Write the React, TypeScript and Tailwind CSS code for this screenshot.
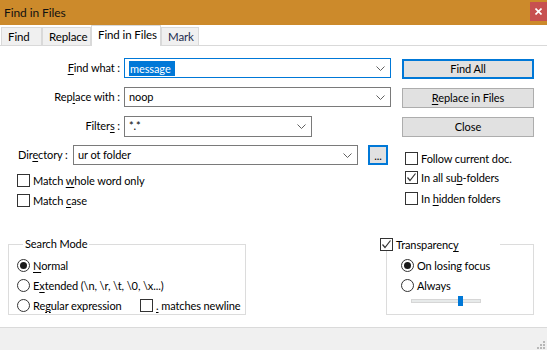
import React from "react";

function U({ children }: { children: React.ReactNode }) {
  return <span className="underline underline-offset-2 decoration-1">{children}</span>;
}

function Chevron() {
  return (
    <svg width="9" height="5" viewBox="0 0 9 5" className="shrink-0">
      <path d="M0.5 0.5 L4.5 4.5 L8.5 0.5" fill="none" stroke="#606060" strokeWidth="1" />
    </svg>
  );
}

function Combo({
  className,
  focused,
  children,
}: {
  className: string;
  focused?: boolean;
  children: React.ReactNode;
}) {
  return (
    <div
      className={`flex items-center justify-between bg-white pl-[4px] pr-[5px] border ${
        focused ? "border-[#0078d7]" : "border-[#7a7a7a]"
      } ${className}`}
    >
      <div className="flex items-center">{children}</div>
      <Chevron />
    </div>
  );
}

function Button({ focused, children }: { focused?: boolean; children: React.ReactNode }) {
  return (
    <div
      className={`flex h-[20px] w-[132px] items-center justify-center bg-[#e1e1e1] ${
        focused ? "border-2 border-[#0078d7]" : "border border-[#adadad]"
      }`}
    >
      {children}
    </div>
  );
}

function Check({ checked }: { checked?: boolean }) {
  return (
    <div className="flex h-[13px] w-[13px] shrink-0 items-center justify-center border border-[#333] bg-white">
      {checked && (
        <svg width="11" height="11" viewBox="0 0 11 11">
          <path d="M1.5 5.5 L4 8.5 L9.5 1.5" fill="none" stroke="#333" strokeWidth="1.2" />
        </svg>
      )}
    </div>
  );
}

function Radio({ checked }: { checked?: boolean }) {
  return (
    <div className="flex h-[13px] w-[13px] shrink-0 items-center justify-center rounded-full border border-[#333] bg-white">
      {checked && <div className="h-[7px] w-[7px] rounded-full bg-[#1a1a1a]" />}
    </div>
  );
}

function CheckRow({ checked, children }: { checked?: boolean; children: React.ReactNode }) {
  return (
    <div className="flex h-[13px] items-center gap-[3px] whitespace-nowrap">
      <Check checked={checked} />
      <span className="leading-none">{children}</span>
    </div>
  );
}

function RadioRow({
  checked,
  className = "",
  children,
}: {
  checked?: boolean;
  className?: string;
  children: React.ReactNode;
}) {
  return (
    <div className={`flex h-[20px] items-center gap-[3px] whitespace-nowrap ${className}`}>
      <Radio checked={checked} />
      <span className="leading-none">{children}</span>
    </div>
  );
}

function SizeGrip() {
  const dots = [
    [9, 1],
    [6, 4],
    [9, 4],
    [3, 7],
    [6, 7],
    [9, 7],
  ];
  return (
    <svg width="12" height="10" viewBox="0 0 12 10" className="self-end">
      {dots.map(([x, y], i) => (
        <rect key={i} x={x} y={y} width="2" height="2" fill="#b8b8b8" />
      ))}
    </svg>
  );
}

export default function App() {
  const tabs = [
    { name: "Find", w: "w-[41px]" },
    { name: "Replace", w: "w-[49px]" },
    { name: "Find in Files", w: "w-[70px]", active: true },
    { name: "Mark", w: "w-[38px]" },
  ];

  return (
    <div className="flex h-[350px] w-[547px] flex-col overflow-hidden whitespace-nowrap bg-white font-['Lato',sans-serif] text-[11px] tracking-[-0.1px] text-black">
      {/* title bar */}
      <div className="flex h-[25px] shrink-0 items-start justify-between bg-[#cc8a2b]">
        <span className="pl-[4px] pt-[7px] text-[12px] leading-none text-[#111]">Find in Files</span>
        <div className="mt-[2px] flex h-[19px] w-[17px] items-center justify-center bg-[#c75050]">
          <svg width="7" height="7" viewBox="0 0 7 7">
            <path d="M0.5 0.5 L6.5 6.5 M6.5 0.5 L0.5 6.5" stroke="#fff" strokeWidth="1.6" />
          </svg>
        </div>
      </div>

      {/* tabs */}
      <div className="flex h-[21px] shrink-0 items-end border-b border-[#d9d9d9] pl-[1px] text-[11.5px]">
        {tabs.map((t) =>
          t.active ? (
            <div
              key={t.name}
              className={`-mb-px flex h-[21px] items-center border border-b-0 border-[#d9d9d9] bg-white pb-[2px] pl-[6px] ${t.w}`}
            >
              {t.name}
            </div>
          ) : (
            <div
              key={t.name}
              className={`flex h-[18px] items-center border border-b-0 border-[#d9d9d9] bg-[#f0f0f0] pl-[6px] ${t.w} ${
                t.name === "Mark" ? "text-[#1c2b4f]" : ""
              }`}
            >
              {t.name}
            </div>
          )
        )}
      </div>

      {/* top section */}
      <div className="flex h-[190px] shrink-0">
        <div className="flex w-[395px] flex-col pt-[12px]">
          <div className="flex h-[20px] items-center gap-[4px]">
            <span className="w-[120px] text-right">
              <U>F</U>ind what :
            </span>
            <Combo className="h-[20px] w-[267px]" focused>
              <span className="bg-[#0078d7] pr-[4px] pl-px leading-[15px] text-white">message</span>
            </Combo>
          </div>
          <div className="mt-[9px] flex h-[20px] items-center gap-[4px]">
            <span className="w-[120px] text-right">
              Rep<U>l</U>ace with :
            </span>
            <Combo className="h-[20px] w-[267px]">noop</Combo>
          </div>
          <div className="mt-[9px] flex h-[21px] items-center gap-[4px]">
            <span className="w-[120px] text-right">
              Filter<U>s</U> :
            </span>
            <Combo className="h-[21px] w-[188px]">*.*</Combo>
          </div>
          <div className="mt-[8px] flex h-[20px] items-center pl-[18px]">
            <span>
              Dir<U>e</U>ctory :
            </span>
            <Combo className="ml-auto h-[20px] w-[285px]">ur ot folder</Combo>
            <div className="ml-[10px] mr-[7px] flex h-[20px] w-[20px] items-end justify-center border-2 border-[#0078d7] bg-[#e1e1e1] pb-[2px] leading-none">
              ...
            </div>
          </div>
          <div className="mt-[9px] flex flex-col gap-[7px] pl-[17px]">
            <CheckRow>
              Match <U>w</U>hole word only
            </CheckRow>
            <CheckRow>
              Match <U>c</U>ase
            </CheckRow>
          </div>
        </div>

        <div className="ml-[7px] flex w-[132px] flex-col pt-[13px]">
          <Button focused>Find All</Button>
          <div className="mt-[9px]">
            <Button>
              <span>
                <U>R</U>eplace in Files
              </span>
            </Button>
          </div>
          <div className="mt-[9px]">
            <Button>Close</Button>
          </div>
          <div className="mt-[15px] flex flex-col gap-[7px] pl-[3px]">
            <CheckRow>Follow current doc.</CheckRow>
            <div className="-mt-px">
              <CheckRow checked>
                In all su<U>b</U>-folders
              </CheckRow>
            </div>
            <div className="mt-px">
              <CheckRow>
                In <U>h</U>idden folders
              </CheckRow>
            </div>
          </div>
        </div>
      </div>

      {/* group boxes */}
      <div className="flex shrink-0 items-start justify-between">
        <fieldset className="ml-[8px] h-[79px] w-[238px] border border-[#dcdcdc] pl-[8px] pt-[3px]">
          <legend className="ml-[6px] px-[2px] leading-[16px]">Search Mode</legend>
          <RadioRow checked>
            <U>N</U>ormal
          </RadioRow>
          <RadioRow>
            E<U>x</U>tended (\n, \r, \t, \0, \x...)
          </RadioRow>
          <div className="flex items-center">
            <RadioRow className="w-[123px]">
              Re<U>g</U>ular expression
            </RadioRow>
            <CheckRow>
              <U>.</U> matches newline
            </CheckRow>
          </div>
        </fieldset>

        <div className="mr-[13px] mt-[2px] flex w-[154px] flex-col">
          <div className="flex h-[13px] items-start">
            <div className="flex w-[120px] items-center gap-[3px]">
              <Check checked />
              <span className="leading-none">
                Transparenc<U>y</U>
              </span>
            </div>
            <div className="mt-[6px] h-[7px] flex-1 border-t border-r border-[#dcdcdc]" />
          </div>
          <div className="ml-[6px] flex h-[64px] flex-col border border-t-0 border-[#dcdcdc] pl-[14px] pt-[4px]">
            <RadioRow checked>On losing focus</RadioRow>
            <RadioRow>Always</RadioRow>
            <div className="ml-[10px] mt-px flex h-[10px] w-[70px] items-center">
              <div className="relative h-[4px] w-full border border-[#d6d6d6] bg-[#e7eaea]">
                <div className="absolute left-[46px] top-[-4px] h-[10px] w-[5px] bg-[#0078d7]" />
              </div>
            </div>
          </div>
        </div>
      </div>

      {/* status bar */}
      <div className="mt-auto flex h-[23px] shrink-0 justify-end border-t border-[#dadada] bg-[#f0f0f0] pr-px">
        <SizeGrip />
      </div>
    </div>
  );
}
